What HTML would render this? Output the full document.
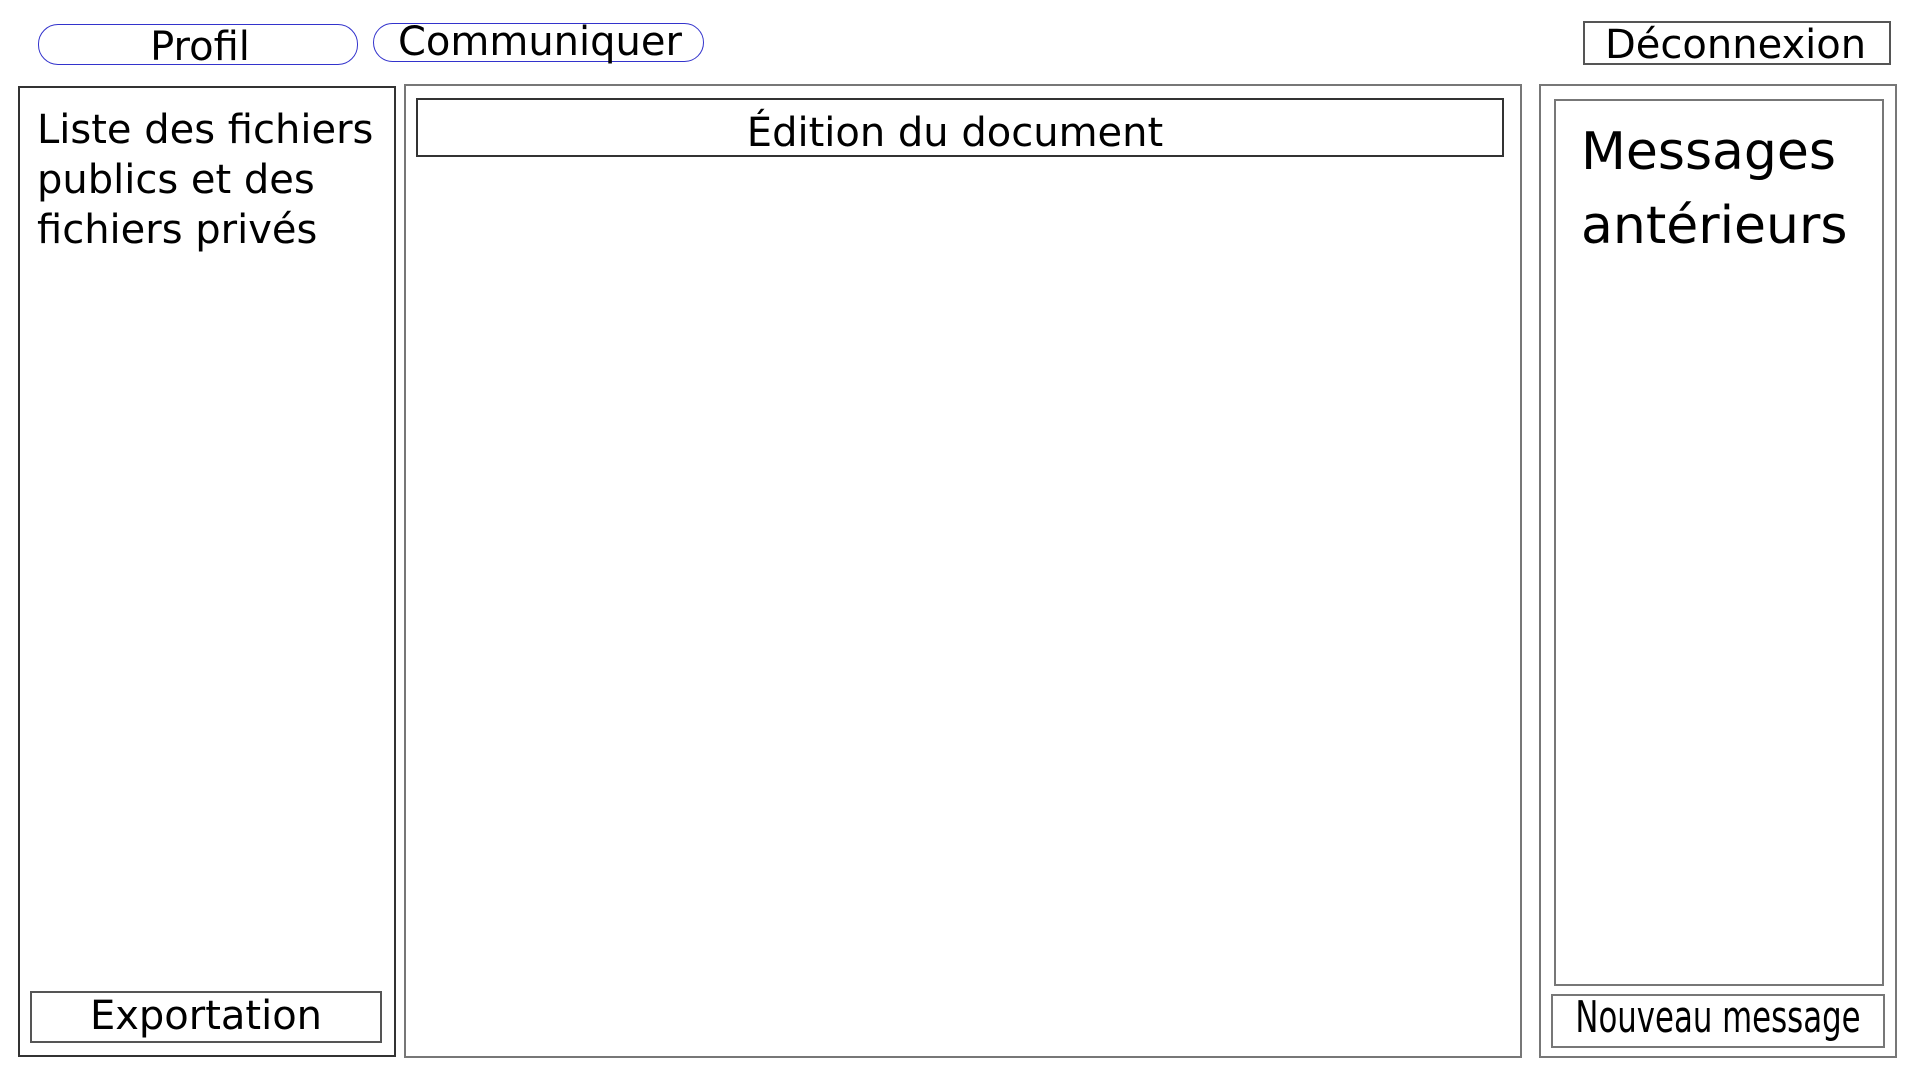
<!DOCTYPE html>
<html><head><meta charset="utf-8"><style>
html,body{margin:0;padding:0;width:1920px;height:1080px;background:#fff;overflow:hidden;}
body{position:relative;font-family:"DejaVu Sans","Liberation Sans",sans-serif;color:#000;}
.b{position:absolute;box-sizing:border-box;border:2px solid #777;}
.t{position:absolute;font-size:40px;line-height:40px;white-space:nowrap;}
</style></head><body>
<div class="b" style="left:38px;top:24px;width:320px;height:41px;border:1.5px solid #3333cc;border-radius:20px;"></div>
<div class="t" style="left:40px;width:320px;text-align:center;top:27px;">Profil</div>
<div class="b" style="left:373px;top:23px;width:331px;height:39px;border:1.5px solid #3333cc;border-radius:20px;"></div>
<div class="t" style="left:398px;top:22px;">Communiquer</div>
<div class="b" style="left:1583px;top:21px;width:308px;height:44px;border-color:#555;"></div>
<div class="t" style="left:1605px;top:25px;">Déconnexion</div>

<div class="b" style="left:18px;top:86px;width:378px;height:971px;border-color:#333;"></div>
<div class="t" style="left:37px;top:105px;line-height:50px;font-size:40px;">Liste des fichiers<br>publics et des<br>fichiers privés</div>
<div class="b" style="left:30px;top:991px;width:352px;height:52px;border-color:#555;"></div>
<div class="t" style="left:30px;width:352px;text-align:center;top:996px;">Exportation</div>

<div class="b" style="left:404px;top:84px;width:1118px;height:974px;"></div>
<div class="b" style="left:416px;top:98px;width:1088px;height:59px;border-color:#333;"></div>
<div class="t" style="left:411px;width:1088px;text-align:center;top:113px;">Édition du document</div>

<div class="b" style="left:1539px;top:84px;width:358px;height:974px;"></div>
<div class="b" style="left:1554px;top:99px;width:330px;height:887px;"></div>
<div class="t" style="left:1581px;top:115px;font-size:52px;line-height:74px;">Messages<br>antérieurs</div>
<div class="b" style="left:1551px;top:994px;width:334px;height:54px;"></div>
<div class="t" style="left:1718px;top:996px;font-size:44px;line-height:44px;transform:translateX(-50%) scaleX(0.7);">Nouveau message</div>
</body></html>
